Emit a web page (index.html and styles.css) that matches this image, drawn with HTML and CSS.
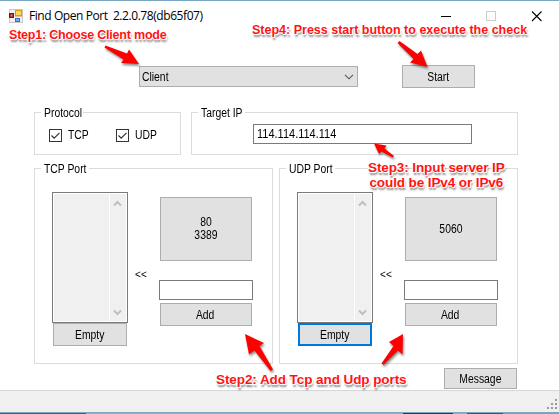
FILE: index.html
```html
<!DOCTYPE html>
<html lang="en">
<head>
<meta charset="utf-8">
<title>Find Open Port</title>
<link rel="stylesheet" href="styles.css">
</head>
<body>
<div class="window">
  <header class="titlebar">
    <svg class="app-icon" width="14" height="14" viewBox="0 0 14 14">
      <rect x=".5" y=".5" width="13" height="13" fill="#f0f0f0" stroke="#c8c8c8"/>
      <rect x="6" y="1" width="7" height="6.500" fill="#d99a10"/>
      <rect x="7" y="2" width="5" height="4" fill="#ffd75a"/>
      <rect x="0" y="4" width="5" height="5" fill="#8c1208"/>
      <rect x="1.500" y="5.500" width="2" height="2" fill="#ff7a60"/>
      <rect x="6" y="9" width="5" height="4" fill="#2f6fd0"/>
      <rect x="7" y="10" width="3" height="2" fill="#79aaf5"/>
    </svg>
    <h1 class="title">Find Open Port&nbsp; 2.2.0.78(db65f07)</h1>
    <svg class="controls" width="102" height="12" viewBox="0 0 102 12">
      <path d="M0 6.500h10" stroke="#000"/>
      <rect x="45.500" y="1.500" width="9" height="9" fill="none" stroke="#ccc"/>
      <path d="M91 1.500l9.500 9.500M100.500 1.500L91 11" stroke="#000" fill="none" stroke-width="1.100"/>
    </svg>
  </header>

  <main class="content">
    <div class="mode-row">
      <div class="combo"><span class="t">Client</span>
        <svg width="10" height="6" viewBox="0 0 10 6"><path d="M1 .8l4 4 4-4" fill="none" stroke="#555" stroke-width="1.100"/></svg>
      </div>
      <button class="btn start"><span class="t">Start</span></button>
    </div>

    <div class="settings-row">
      <section class="group protocol">
        <h2 class="legend"><span class="t">Protocol</span></h2>
        <div class="checks">
          <label class="check"><svg width="13" height="13" viewBox="0 0 13 13"><rect x=".5" y=".5" width="12" height="12" fill="#fff" stroke="#333"/><path d="M2.500 6.500l2.700 2.700 5.300-5.400" fill="none" stroke="#333" stroke-width="1.200"/></svg><span class="t">TCP</span></label>
          <label class="check"><svg width="13" height="13" viewBox="0 0 13 13"><rect x=".5" y=".5" width="12" height="12" fill="#fff" stroke="#333"/><path d="M2.500 6.500l2.700 2.700 5.300-5.400" fill="none" stroke="#333" stroke-width="1.200"/></svg><span class="t">UDP</span></label>
        </div>
      </section>
      <section class="group target">
        <h2 class="legend"><span class="t">Target IP</span></h2>
        <div class="field ip"><span class="t num">114.114.114.114</span></div>
      </section>
    </div>

    <div class="ports-row">
      <section class="group ports">
        <h2 class="legend"><span class="t">TCP Port</span></h2>
        <div class="ports-body">
          <div class="list-col">
            <div class="listbox"><div class="list-items"></div><div class="scrollbar">
              <svg width="9" height="7" viewBox="0 0 9 7"><path d="M1 5.500L4.500 2 8 5.500" fill="none" stroke="#bfbfbf" stroke-width="2"/></svg>
              <svg width="9" height="7" viewBox="0 0 9 7"><path d="M1 1.500L4.500 5 8 1.500" fill="none" stroke="#bfbfbf" stroke-width="2"/></svg>
            </div></div>
            <button class="btn empty"><span class="t">Empty</span></button>
          </div>
          <div class="move"><span class="t">&lt;&lt;</span></div>
          <div class="add-col">
            <button class="btn preset"><span class="t">80<br>3389</span></button>
            <div class="field port"></div>
            <button class="btn add"><span class="t">Add</span></button>
          </div>
        </div>
      </section>
      <section class="group ports">
        <h2 class="legend"><span class="t">UDP Port</span></h2>
        <div class="ports-body">
          <div class="list-col">
            <div class="listbox"><div class="list-items"></div><div class="scrollbar">
              <svg width="9" height="7" viewBox="0 0 9 7"><path d="M1 5.500L4.500 2 8 5.500" fill="none" stroke="#bfbfbf" stroke-width="2"/></svg>
              <svg width="9" height="7" viewBox="0 0 9 7"><path d="M1 1.500L4.500 5 8 1.500" fill="none" stroke="#bfbfbf" stroke-width="2"/></svg>
            </div></div>
            <button class="btn empty focused"><span class="t">Empty</span></button>
          </div>
          <div class="move"><span class="t">&lt;&lt;</span></div>
          <div class="add-col">
            <button class="btn preset"><span class="t">5060</span></button>
            <div class="field port"></div>
            <button class="btn add"><span class="t">Add</span></button>
          </div>
        </div>
      </section>
    </div>
    <button class="btn message"><span class="t">Message</span></button>
  </main>

  <footer class="statusbar">
    <svg width="11" height="11" viewBox="0 0 11 11" fill="#999"><path d="M8 0h2v2h-2zM4 4h2v2h-2zM8 4h2v2h-2zM0 8h2v2h-2zM4 8h2v2h-2zM8 8h2v2h-2z"/></svg>
  </footer>
  <div class="desktop-edge"></div>

  <svg class="arrows" width="559" height="414" viewBox="0 0 559 414">
    <g fill="#f00">
      <path d="M105.500 45.500L127 53.500 129 49.500 139 64 121 63 123.500 59.500 104.500 47.500Z"/>
      <path d="M399.500 41L417.500 54 421 50.500 427.500 67 410 62.500 413.500 59 397.500 43Z"/>
      <path d="M374 143.500L386.500 145.500 384.500 148.500 394 156 392.500 157.500 381.500 151.500 379 154Z"/>
      <path d="M245 334L264 343 259.500 346 273 369.500 270.500 371 254.500 350.500 249 354.500Z"/>
      <path d="M403 334L402.500 354.500 398 350.500 383.500 365 381.500 363.500 393.500 346 389 342Z"/>
    </g>
  </svg>
  <p class="note step1">Step1: Choose Client mode</p>
  <p class="note step2">Step2: Add Tcp and Udp ports</p>
  <p class="note step3">Step3: Input server IP<br>could be IPv4 or IPv6</p>
  <p class="note step4">Step4: Press start button to execute the check</p>
</div>
</body>
</html>
```
FILE: styles.css
```css
* { box-sizing: border-box; }
body { margin: 0; background: #fff; font-family: "Liberation Sans", sans-serif; color: #000; }
h1, h2, p { margin: 0; font-weight: normal; }
svg { display: block; flex: none; }
.window { position: relative; width: 559px; height: 414px; display: flex; flex-direction: column; border-top: 1px solid #7aa7c2; overflow: hidden; }

.titlebar { height: 30px; flex: none; display: flex; align-items: center; padding: 0 15px 0 9px; }
.title { margin-left: 6px; font: 12px/16px "Open Sans", sans-serif; letter-spacing: -.43px; white-space: nowrap; }
.controls { margin-left: auto; margin-right: 1px; }

.content { flex: 1; display: flex; flex-direction: column; padding: 34px 41px 0 34px; }
.t { display: inline-block; font-size: 12.5px; line-height: 13px; transform: scaleX(.83); transform-origin: center; white-space: nowrap; }
.mode-row { height: 23px; display: flex; align-items: center; justify-content: space-between; padding: 0 43px 0 105px; }
.combo { width: 219px; height: 21px; display: flex; align-items: center; justify-content: space-between; padding: 1px 3px 0 2px; background: #e1e1e1; border: 1px solid #adadad; }
.combo .t, .legend .t, .check .t, .ip .t { transform-origin: left; }
.btn { display: flex; align-items: center; justify-content: center; padding: 2px 0 0; margin: 0; background: #e1e1e1; border: 1px solid #adadad; font-family: inherit; color: #000; }
.start { width: 73px; height: 23px; }

.settings-row { display: flex; gap: 10px; margin-top: 24px; height: 43px; }
.group { border: 1px solid #dcdcdc; }
.legend { width: fit-content; height: 14px; display: flex; align-items: center; margin: -7px 0 0 6px; padding-left: 2.5px; background: #fff; }
.legend .t { margin-right: -6px; }
.protocol { width: 147px; }
.target { width: 327px; }
.checks { display: flex; gap: 19px; margin: 8px 0 0 14px; }
.check { width: 48px; display: flex; align-items: center; gap: 6px; }
.check .t { padding-top: 1px; }
.field { background: #fff; border: 1px solid #7a7a7a; }
.ip { width: 219px; height: 20px; margin: 4px 0 0 61px; padding-left: 3px; display: flex; align-items: center; }
.ip .num { transform: scaleX(.88); }

.ports-row { display: flex; gap: 6px; margin-top: 13px; height: 196px; }
.ports { width: 239px; }
.ports-body { display: flex; padding: 16px 0 0 17px; }
.list-col { width: 76px; }
.listbox { height: 131px; display: flex; padding: 1px; border: 1px solid #7a7a7a; background: #fff; }
.list-items { width: 55px; background: #f0f0f0; margin-right: 1px; }
.scrollbar { flex: 1; display: flex; flex-direction: column; align-items: center; justify-content: space-between; padding: 6px 1px 5px 0; background: #f0f0f0; }
.empty { width: 74px; height: 23px; margin: 0 auto; }
.focused { border: 2px solid #0078d7; }
.move { width: 31px; padding: 72px 0 0 7px; }
.move .t { transform: scaleX(.88); transform-origin: left; font-size: 11.5px; }
.add-col { width: 94px; padding-top: 5px; display: flex; flex-direction: column; align-items: center; }
.preset { width: 92px; height: 64px; padding: 0 1px 0 0; }
.port { width: 94px; height: 20px; margin: 19px 0 3px; }
.add { width: 92px; height: 23px; padding-right: 1px; }
.message { width: 73px; height: 21px; margin: 4px 1px 0 auto; padding-right: 1px; }

.statusbar { height: 22px; flex: none; display: flex; justify-content: flex-end; align-items: flex-end; padding: 0 1px 2px 0; background: #f0f0f0; border-top: 1px solid #d7d7d7; }
.desktop-edge { height: 2px; flex: none; border-top: 1px solid #7aa7c2; background: linear-gradient(90deg, #147096 0 86px, #9eaeb8 86px 403px, #293c44 403px 453px, #9eaeb8 453px 467px, #555044 467px 503px, #8c9ba4 503px); }

.arrows { position: absolute; left: 0; top: -1px; filter: drop-shadow(1px 2px 1px rgba(0, 0, 0, .45)); }
.note { position: absolute; font-weight: bold; font-size: 12.5px; line-height: 15px; color: #ff1414; white-space: nowrap; text-shadow: 1px 0 #fff, -1px 0 #fff, 0 1px #fff, 0 -1px #fff, 1px 1px #fff, -1px -1px #fff, 1px 3px 2px rgba(0, 0, 0, .5); }
.step1 { left: 9px; top: 27px; letter-spacing: -.2px; }
.step2 { left: 216px; top: 371px; font-size: 13.5px; letter-spacing: -.08px; }
.step3 { left: 368px; top: 159px; text-align: center; font-size: 13.5px; letter-spacing: -.1px; }
.step4 { left: 252px; top: 22px; }
```
